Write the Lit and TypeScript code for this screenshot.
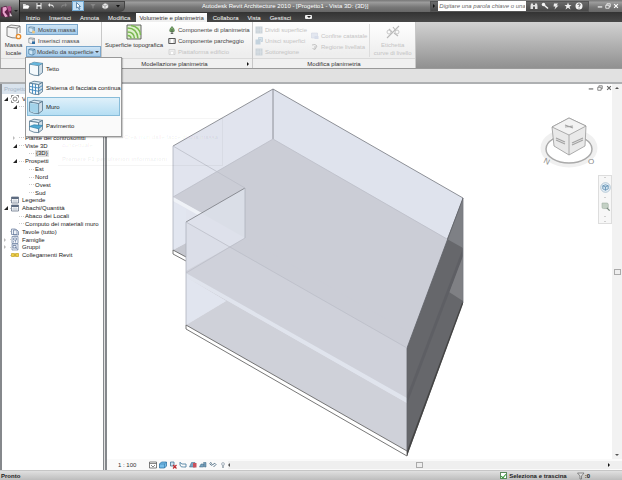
import { LitElement, html, svg, css, nothing } from "lit";
import { customElement, property } from "lit/decorators.js";
import { classMap } from "lit/directives/class-map.js";

const cube = (inner: unknown) => svg`
  <path d="M1.5 3.2 6 1.2 14.5 2.4 10.6 4.6Z" fill="#dcebf4" stroke="#52748c" stroke-width=".8"/>
  <path d="M1.5 3.2 10.6 4.6V14.6Q6 15 1.5 12.4Z" fill="#f4f9fc" stroke="#52748c" stroke-width=".8"/>
  <path d="M10.6 4.6 14.5 2.4V11.6L10.6 14.6Z" fill="#cfdde7" stroke="#52748c" stroke-width=".8"/>${inner}`;

const art: Record<string, unknown> = {
  roof: cube(svg`<path d="M1.5 3.2 6 1.2 14.5 2.4 10.6 4.6Z" fill="#64b5dc"/>`),
  curtain: cube(svg`<path d="M4.5 3.8V13.6M7.5 4.2V14.4M1.5 6.4 10.6 8 14.5 5.5M1.5 9.4 10.6 11.3 14.5 8.6" fill="none" stroke="#3c86bd" stroke-width=".9"/>`),
  wall: cube(svg`<path d="M2 4 10.2 5.2V14Q6 14.4 2 12Z" fill="#a3d3ea"/>`),
  floor: cube(svg`<path d="M1.5 8.5 6 6.8 14.5 7.5 10.6 10.8Z" fill="#4fa9d3" stroke="#2f7fa8" stroke-width=".7"/>`),
  mass: svg`<path d="M1 3 5 1 14 2 11 4.2Z M1 3V12Q6 14.5 11 14V4.2M14 2V9" fill="#f5f5f5" stroke="#666" stroke-width=".8"/><circle cx="12.500" cy="12.500" r="2.200" fill="#fff3dc" stroke="#e58a2c" stroke-width="1.3"/>`,
  show: svg`<path d="M1.5 3 5 1.5 13 2.8 10 4.6Z M1.5 3V11.5Q6 13.6 10 13V4.6M13 2.8V10" fill="#d9ebf7" stroke="#3f6b8d"/><circle cx="11" cy="12" r="3" fill="#efc77e"/>`,
  place: svg`<path d="M1.5 3 5 1.5 13 2.8 10 4.6Z M1.5 3V11.5Q6 13.6 10 13V4.6M13 2.8V10" fill="#f4f4f4" stroke="#56646f"/><path d="M8 9h6v5H8z" fill="#2e6fa5"/>`,
  face: svg`<path d="M1.5 3 5 1.5 14 2.8 10 4.6Z M1.5 3V11.5Q6 14.6 10 14V4.6M14 2.8V11L10 14" fill="#cfe7f7" stroke="#2c658e" stroke-width="1.2"/>`,
  topo: svg`<path d="M1 1H15V15H1Z" fill="#dff0cf" stroke="#555" stroke-width=".9"/><path d="M1.5 4Q11 4 12 14.5M1.5 8Q8 8 8.5 14.5M5 1.5Q14 3 14.5 11M1.5 11.5Q5 11.5 5 14.5" fill="none" stroke="#79b850" stroke-width="1.5"/>`,
  tree: svg`<path d="M8 1Q13.500 6 12.500 10.500Q10 12.500 8 11.500Q6 12.500 3.500 10.500Q2.500 6 8 1Z" fill="#7cae68" stroke="#3d6137" stroke-width="1.3"/><path d="M8 6V15M5.500 15H10.500" stroke="#444" stroke-width="1.5"/>`,
  park: svg`<path d="M1.500 3H14.500V13H1.500Z" fill="#fff" stroke="#444" stroke-width="1.8"/><path d="M4 3V13M12 3V13" stroke="#777"/>`,
  pad: svg`<path d="M2 3H14V13H2Z" fill="#eee" stroke="#ccc" stroke-width="1.5"/><path d="M5 7H11V13H5Z" fill="#fff" stroke="#d4d4d4"/>`,
  split: svg`<path d="M1 1H15V15H1Z" fill="#ccd4da"/><path d="M6 1V15M11 1V15M1 8H15" stroke="#dfe5e9"/>`,
  merge: svg`<path d="M1 5H11V15H1Z" fill="#c4d3de"/><path d="M7 1H15V9H12V5H7Z" fill="#dae3ea" stroke="#abc0d0"/>`,
  bound: svg`<path d="M1 2H13V12H1Z" fill="#e3e7f0" stroke="#cdd3e0"/><path d="M7 8H15V14H7Z" fill="#d7ddea"/>`,
  graded: svg`<path d="M2 4Q9 1 12 6L8 13L3 11M8 6V12" fill="none" stroke="#bbb" stroke-width="1.7"/>`,
  label: svg`<path d="M2 14 14 2M4 5l3 3M9 9l4 3M8 3l3 4" fill="none" stroke="#b9b9b9" stroke-width="1.1"/><circle cx="4" cy="8" r="2" fill="none" stroke="#c8c8c8"/><circle cx="12" cy="8" r="2" fill="none" stroke="#c8c8c8"/>`,
  open: svg`<path d="M2 4H7L8 6H13V13H2Z" fill="#ddd"/><path d="M4 8H15L12 13H2Z" fill="#fff"/>`,
  save: svg`<path d="M3 2H13V14H3Z" fill="#eee"/><path d="M5 2H11V6H5ZM5 9H11V14H5Z" fill="#555"/>`,
  undo: svg`<path d="M6 2 2 6 6 10V7Q12 6 13 12Q15 4 6 5Z" fill="#eee"/>`,
  redo: svg`<path d="M10 2 14 6 10 10V7Q4 6 3 12Q1 4 10 5Z" fill="#999"/>`,
  arrow: svg`<path d="M5 1V12L8 10L10 15L12 14L10 9H13Z" fill="#fff" stroke="#275a86" stroke-width="1.3"/>`,
  dot: svg`<path d="M3 4H13L9 9V13H7V9Z" fill="#999"/>`,
  view3d: svg`<path d="M3 6 8 3 14 5V11L8 14 3 11Z" fill="#eee" stroke="#ccc"/><path d="M3 6 8 8 14 5M8 8V14" fill="none" stroke="#666"/>`,
  caret: svg`<path d="M4 6H12L8 11Z" fill="#111"/>`,
  find: svg`<path d="M2 3H6V14H1V8ZM10 3H14L15 8V14H10ZM6 6H10V9H6Z" fill="#e2e2e2"/>`,
  key: svg`<circle cx="5" cy="5" r="3.500" fill="#f4f4f4"/><path d="M6 6 14 13" stroke="#f4f4f4" stroke-width="3"/>`,
  comm: svg`<path d="M4 3H12L9 7H13L5 15L7 9H3" fill="#eee"/>`,
  star: svg`<path d="M8 1 10 6H15L11 9.500L13 15L8 11.500L3 15L5 9.500L1 6H6Z" fill="#eee"/>`,
  help: svg`<circle cx="8" cy="8" r="7" fill="#f5f5f5"/><path d="M5.500 6Q6 3.500 8 3.500T10.500 6Q10 7.500 8 8.500V10M8 11.500V13" fill="none" stroke="#444" stroke-width="1.8"/>`,
  min: svg`<path d="M2 9H14V12H2Z" fill="currentColor"/>`,
  max: svg`<path d="M5 6V2H14V10H11M2 6H11V14H2Z" fill="none" stroke="currentColor" stroke-width="2"/>`,
  close: svg`<path d="M3 3 13 13M13 3 3 13" stroke="currentColor" stroke-width="3"/>`,
  sheet: svg`<path d="M1 2H15V14H1Z" fill="#fff" stroke="#5d6b80" stroke-width="1.5"/><path d="M1 2H15V6H1Z" fill="#5d6b80"/><path d="M6 6V14M10 6V14M1 10H15" stroke="#9aa5b5"/>`,
  page: svg`<path d="M1 2H9L12 5V13H1ZM5 4H12L15 7V14H5Z" fill="#eef2f8" stroke="#62779a" stroke-width="1.4"/>`,
  family: svg`<path d="M2 1H14V15H2Z" fill="#f1f4fa" stroke="#667b9e" stroke-width="1.4"/><path d="M5 4H11V8H5ZM5 10V13M9 8V13" fill="none" stroke="#667b9e" stroke-width="1.3"/>`,
  group: svg`<path d="M2 2H14V14H2Z" fill="#f1f4fa" stroke="#667b9e" stroke-width="1.3"/><path d="M4 5H10V10H4ZM9 8L13 13" fill="none" stroke="#4c638b" stroke-width="1.3"/>`,
  link: svg`<path d="M1 5H7V11H1ZM9 5H15V11H9ZM5 8H11" fill="#f0d24a" stroke="#c4a21c" stroke-width="1.400"/>`,
  views: svg`<circle cx="8" cy="8" r="4" fill="none" stroke="#555" stroke-width="1.4"/><path d="M1 5V1H5M11 1H15V5M15 11V15H11M5 15H1V11" fill="none" stroke="#555" stroke-width="1.4"/>`,
  detail: svg`<path d="M1 2H15V14H1Z" fill="#fff" stroke="#555" stroke-width="1.5"/><path d="M1 5H15M4 8 8 12 12 8" fill="none" stroke="#555" stroke-width="1.400"/>`,
  box: svg`<path d="M1 6 5 2H15V10L11 14H1Z" fill="#77bde8" stroke="#246a9c" stroke-width="1.400"/><path d="M1 6H11V14M11 6L15 2" fill="none" stroke="#246a9c"/>`,
  sun: svg`<path d="M3 2H10V10H3Z" fill="#cbe3f1" stroke="#3e6d8e" stroke-width="1.500"/><path d="M8 8 15 15M15 8 8 15" stroke="#c0282c" stroke-width="2.300"/>`,
  crop: svg`<path d="M2 2V8Q3 13 9 12H14V6H6L2 3" fill="none" stroke="#5484a4" stroke-width="1.800"/>`,
  cropx: svg`<path d="M1 12 5 3H12V12Z" fill="#78a6c6" stroke="#35607f"/><path d="M8 4H15V13H8Z" fill="#c8505a"/>`,
  cropv: svg`<path d="M1 12 4 6H9V12ZM9 3H14V12H11Z" fill="#7aa3be" stroke="#35607f"/>`,
  glass: svg`<path d="M1 5Q4 11 8 7Q12 2 14 7L9 12M2 3 6 5" fill="none" stroke="#41627a" stroke-width="1.700"/>`,
  bulb: svg`<circle cx="8" cy="6" r="3" fill="#e0e6ec" stroke="#7e8d99"/><path d="M8 9V14" stroke="#7e8d99" stroke-width="2.500"/>`,
  funnel: svg`<path d="M1 2H14L9 8V14H6V8Z" fill="#ddd" stroke="#555" stroke-width="1.200"/>`,
  wheel: svg`<circle cx="8" cy="8" r="7" fill="#e7f0f7" stroke="#9cb4c8"/><path d="M4 5.500 8 4 12 5.500V10L8 12 4 10ZM4 5.500 8 7 12 5.500M8 7V12" fill="#cde0ee" stroke="#4f81a8"/>`,
  zoom: svg`<path d="M3 3H10Q12 3 12 5V9Q12 11 10 11H5Q3 11 3 9Z" fill="#c3d0c4" stroke="#a3b2a6"/><path d="M10 10 14 14" stroke="#7a8b80" stroke-width="2"/>`,
  logo: svg`<path d="M1 14V4L7 2 9 5 13 3V12L10 15Z" fill="#5f2148"/><path d="M3 4 7 3 8 6 5 9 9 14 6 15 3 10Z" fill="#e9a4cd"/><path d="M8 3 12 2 13 7 10 9Z" fill="#b1508b"/><path d="M11 9 14 14H11Z" fill="#d9cbd5"/>`,
};

@customElement("ui-icon")
class UiIcon extends LitElement {
  @property() name = "";
  static styles = css`
    :host { display: block; flex: none; width: 8px; height: 8px; }
    svg { display: block; width: 100%; height: 100%; }
  `;
  render() {
    return html`<svg viewBox="0 0 16 16" aria-hidden="true">${art[this.name] ?? nothing}</svg>`;
  }
}

type Row = { text: string; depth: number; open?: boolean; icon?: string; selected?: boolean };
const tree: Row[] = [
  { text: "Viste", depth: 0, open: true, icon: "views" },
  { text: "", depth: 1, open: true },
  { text: "", depth: 2 },
  { text: "", depth: 2 },
  { text: "", depth: 2 },
  { text: "Piante dei controsoffitti", depth: 1, open: false },
  { text: "Viste 3D", depth: 1, open: true },
  { text: "{3D}", depth: 2, selected: true },
  { text: "Prospetti", depth: 1, open: true },
  { text: "Est", depth: 2 },
  { text: "Nord", depth: 2 },
  { text: "Ovest", depth: 2 },
  { text: "Sud", depth: 2 },
  { text: "Legende", depth: 0, icon: "sheet" },
  { text: "Abachi/Quantità", depth: 0, open: true, icon: "sheet" },
  { text: "Abaco dei Locali", depth: 1 },
  { text: "Computo dei materiali muro", depth: 1 },
  { text: "Tavole (tutto)", depth: 0, icon: "page" },
  { text: "Famiglie", depth: 0, open: false, icon: "family" },
  { text: "Gruppi", depth: 0, open: false, icon: "group" },
  { text: "Collegamenti Revit", depth: 0, icon: "link" },
];

const tabs = ["Inizio", "Inserisci", "Annota", "Modifica", "Volumetrie e planimetria", "Collabora", "Vista", "Gestisci"];
const faceMenu = [
  ["roof", "Tetto"],
  ["curtain", "Sistema di facciata continua"],
  ["wall", "Muro"],
  ["floor", "Pavimento"],
];

@customElement("app-root")
class AppRoot extends LitElement {
  static styles = css`
    :host {
      display: flex; flex-direction: column; height: 100vh; overflow: hidden;
      background: #e1e1e1; color: #333;
      font: 6px/8px "Liberation Sans", Arial, sans-serif;
    }
    * { box-sizing: border-box; }
    button, input { font: inherit; color: inherit; margin: 0; padding: 0; border: 0; background: none; border-radius: 0; }
    button { display: flex; align-items: center; white-space: nowrap; }
    input { min-width: 0; }

    .top { display: grid; grid-template-columns: 20px minmax(0, 1fr); flex: none; }
    .app { position: relative; flex-direction: row; background: linear-gradient(#a5a5a5, #4c4c4c 60%, #333); border-right: 1px solid #222; }
    .app ui-icon { width: 14px; height: 16px; }
    .app .tri { color: #222; }
    .tri { width: 0; height: 0; border: 2px solid transparent; border-bottom: 0; border-top-color: currentColor; flex: none; }
    .title { display: flex; align-items: center; height: 12px; background: linear-gradient(#777, #9b9b9b 20%, #777 60%, #666); color: #fff; }
    .quick { display: flex; align-items: center; justify-content: space-between; width: 105px; height: 11px; padding: 0 2px; background: linear-gradient(#777, #484848); border: 1px solid #444; border-left: 0; border-radius: 0 0 5px 0; }
    .quick .on { background: #c4e0f5; border: 1px solid #72aad4; padding: 0 1px; }
    .quick .dim { opacity: .6; }
    .name { flex: 1; padding: 0 0 0 77px; margin: 0; font-size: 6px; line-height: 8px; font-weight: normal; white-space: nowrap; }
    .info { display: flex; align-items: center; justify-content: space-between; width: 159px; height: 11px; background: linear-gradient(#6a6a6a, #484848); padding: 0 5px 0 2px; border: 1px solid #555; }
    .info input { width: 88px; height: 10px; background: #fff; font-style: italic; padding: 0 1px; }
    .info input::placeholder { color: #666; opacity: 1; }
    .side { width: 0; height: 0; border: 2px solid transparent; border-right: 0; border-left-color: #111; }
    .win { display: flex; justify-content: flex-end; gap: 2px; width: 33px; padding: 0 3px 0 0; }
    .win ui-icon { width: 6px; height: 6px; }
    .tabs { display: flex; align-items: flex-end; height: 10px; padding-left: 3px; background: linear-gradient(#333, #484848); color: #fff; }
    .tabs button { height: 9px; padding: 0 3px; margin-right: 3px; }
    .tabs .active { background: linear-gradient(#fff, #eee); color: #333; }
    .tabs .pill { width: 7px; height: 4px; background: #eee; border-radius: 1px; align-self: center; margin-left: 8px; padding: 0; justify-content: center; color: #222; }

    .ribbon { display: flex; flex: none; height: 47px; background: linear-gradient(#d2d2d2, #909090); border-bottom: 1px solid #999; }
    .panel { display: flex; flex-direction: column; border-right: 1px solid #c8c8c8; background: linear-gradient(#fff, #eeeeee 70%); }
    .mass { width: 102px; border-left: 1px solid #aaa; }
    .site { width: 151px; }
    .modify { width: 163px; }
    .body { display: flex; flex: 1; min-height: 0; align-items: flex-start; padding-top: 2px; }
    .caption { display: flex; flex: none; align-items: center; height: 10px; background: #f0f0f0; border-top: 1px solid #dadada; margin: 0; font-size: 6px; font-weight: normal; justify-content: center; }
    .caption span { flex: 1; text-align: center; }
    .caption .side { margin-right: 3px; }
    .big { flex-direction: column; line-height: 8px; text-align: center; flex: none; gap: 1px; }
    .big ui-icon { width: 16px; height: 16px; }
    .mass .big { width: 25px; }
    .site .big { width: 64px; }
    .modify .big { flex: 1; height: 33px; border-left: 1px solid #ddd; }
    .col { display: flex; flex-direction: column; align-items: flex-start; }
    .col button { height: 11px; gap: 2px; padding: 0 1px; border: 1px solid transparent; color: #444; }
    .col .hot { background: linear-gradient(#cfe5f6, #a2caea); border-color: #7ba7cc; }
    .drop .hot { gap: 1px; }
    .modify .col + .col { padding-top: 6px; }
    button:disabled, .col button:disabled { color: #c4c4c4; }
    .drop { position: relative; display: flex; }

    .menu { position: absolute; z-index: 3; top: 11px; left: -1px; width: 97px; margin: 0; padding: 1px; list-style: none; background: #fafafa; border: 1px solid #999; box-shadow: 1px 1px 1px #0003; }
    .menu li { display: flex; }
    .menu li button { width: 100%; height: 19px; gap: 2px; padding: 0 1px; border-width: 1px 0; color: #222; }
    .menu ui-icon { width: 16px; height: 16px; }
    .menu li .picked { background: linear-gradient(#dff0fa, #b5def3); border: 1px solid #88bcd9; padding: 0; }
    .tip { position: absolute; z-index: 2; top: 72px; left: 32px; width: 165px; height: 48px; padding: 14px 4px 0; border: 1px solid #0000000a; border-left: 0; color: #00000012; pointer-events: none; }
    .tip p { margin: 0; white-space: nowrap; }
    .tip .more { margin-top: 6px; font-weight: bold; }
    .tip .body-text { text-align: right; }

    .work { display: grid; grid-template-columns: 105px minmax(0, 1fr); flex: 1; min-height: 0; margin-top: 13px; border-top: 2px solid #aeb0b2; }
    .browser { background: #fff; border: solid #85888c; border-width: 0 1px 0 2px; margin-right: 1px; min-width: 0; }
    .browser h2 { height: 10px; margin: 0; padding-left: 2px; font-size: 6px; line-height: 10px; font-weight: normal; background: #d9e3ed; color: #a5b4c6; white-space: nowrap; overflow: hidden; }
    .tree { display: flex; flex-direction: column; height: 165px; margin: 0; padding: 1px 0 0 2px; list-style: none; }
    .tree li { display: flex; align-items: center; flex: 1; min-height: 0; color: #222; white-space: nowrap; }
    .tree .d1 { padding-left: 9px; }
    .tree .d2 { padding-left: 19px; }
    .twist { width: 6px; flex: none; }
    .twist.open::before { content: ""; display: block; width: 0; height: 0; border: 2px solid transparent; border-right-color: #222; border-bottom-color: #222; }
    .twist.shut::before { content: ""; display: block; width: 0; height: 0; border: 2px solid transparent; border-left-color: #bbb; }
    .dash { width: 5px; border-top: 1px dotted #ccc; margin-right: 1px; flex: none; }
    .d0 ui-icon { margin-right: 3px; }
    .d0 .dash { width: 1px; margin-right: 0; }
    .sel { background: #dedede; padding: 0 1px; line-height: 7px; }

    .view { display: grid; grid-template: minmax(0, 1fr) 11px / minmax(0, 1fr) 10px; min-width: 0; border-left: 2px solid #85888c; background: #fff; }
    .canvas { position: relative; min-height: 0; }
    .canvas svg.scene { display: block; width: 100%; height: 100%; }
    .mdi { position: absolute; top: 1px; right: 0; display: flex; gap: 3px; color: #666; }
    .mdi ui-icon { width: 6px; height: 6px; }
    .nav { position: absolute; top: 91px; right: 0; display: flex; flex-direction: column; align-items: center; justify-content: space-between; width: 14px; height: 49px; padding: 1px; border: 1px solid #ddd; background: #f7f7f7; color: #aaa; }
    .nav ui-icon { width: 11px; height: 11px; }
    .nav .tri { border-width: 1px; }
    .vbar { display: flex; flex-direction: column; align-items: center; justify-content: space-between; background: #f2f2f2; padding: 3px 0; color: #555; }
    .up { border: 2px solid transparent; border-top: 0; border-bottom-color: currentColor; }
    .thumb { width: 7px; height: 6px; border: 1px solid #aaa; background: #eee; }
    .foot { grid-column: 1 / -1; display: flex; align-items: center; background: #fafafa; color: #333; }
    .scale { width: 42px; padding-left: 11px; }
    .controls { display: flex; gap: 2px; width: 79px; }
    .hbar { display: flex; flex: 1; align-items: center; justify-content: space-between; height: 8px; padding: 0 12px 0 0; background: #efefef; color: #555; }
    .left { border: 2px solid transparent; border-left: 0; border-right-color: #555; width: 0; height: 0; }
    .status { display: flex; align-items: center; flex: none; height: 10px; padding: 0 32px 0 1px; background: linear-gradient(#e0e0e0, #bdbdbd); border-top: 1px solid #c6c6c6; font-weight: bold; color: #222; }
    .status label { display: flex; align-items: center; gap: 2px; margin-left: auto; }
    .status input { appearance: none; width: 7px; height: 7px; background: #fff; border: 1px solid #5c8a5c; }
    .status input:checked::before { content: ""; display: block; width: 2px; height: 4px; margin-left: 1px; border: solid #349a38; border-width: 0 1px 1px 0; transform: rotate(40deg); }
    .filter { margin-left: 10px; }
  `;

  tool(icon: string, text: string, off = false, hot = false) {
    return html`<button ?disabled=${off} class=${classMap({ hot })}><ui-icon name=${icon}></ui-icon>${text}</button>`;
  }

  iconButton(icon: string, label: string, cls = "") {
    return html`<button class=${cls} aria-label=${label}><ui-icon name=${icon}></ui-icon></button>`;
  }

  header() {
    return html`<header class="top">
      <button class="app" aria-label="Menu applicazione"><ui-icon name="logo"></ui-icon><span class="tri"></span></button>
      <div>
        <div class="title">
          <div class="quick">
            ${this.iconButton("open", "Apri")}${this.iconButton("save", "Salva")}${this.iconButton("undo", "Annulla")}
            ${this.iconButton("redo", "Ripeti", "dim")}${this.iconButton("arrow", "Modifica", "on")}
            ${this.iconButton("dot", "Opzioni", "dim")}${this.iconButton("view3d", "Vista 3D")}${this.iconButton("caret", "Personalizza")}
          </div>
          <h1 class="name">Autodesk Revit Architecture 2010 - [Progetto1 - Vista 3D: {3D}]</h1>
          <div class="info">
            <span class="side"></span>
            <input aria-label="Cerca" placeholder="Digitare una parola chiave o una frase">
            ${this.iconButton("find", "Trova")}${this.iconButton("key", "Abbonamento")}${this.iconButton("comm", "Comunicazioni")}
            ${this.iconButton("star", "Preferiti")}${this.iconButton("help", "Guida")}
          </div>
          <div class="win">${this.iconButton("min", "Riduci")}${this.iconButton("max", "Ripristina")}${this.iconButton("close", "Chiudi")}</div>
        </div>
        <nav class="tabs">
          ${tabs.map((t, i) => html`<button class=${i === 4 ? "active" : ""}>${t}</button>`)}
          <button class="pill" aria-label="Riduci barra"><span class="tri"></span></button>
        </nav>
      </div>
    </header>`;
  }

  ribbon() {
    return html`<div class="ribbon">
      <section class="panel mass">
        <div class="body">
          <button class="big"><ui-icon name="mass"></ui-icon><span>Massa<br>locale</span></button>
          <div class="col">
            ${this.tool("show", "Mostra massa", false, true)}
            ${this.tool("place", "Inserisci massa")}
            <div class="drop">
              <button class="hot"><ui-icon name="face"></ui-icon>Modello da superficie<span class="tri"></span></button>
              <ul class="menu">
                ${faceMenu.map(([icon, text]) => html`<li><button class=${text === "Muro" ? "picked" : ""}><ui-icon name=${icon}></ui-icon>${text}</button></li>`)}
              </ul>
              <div class="tip">
                <p class="body-text">Crea muri dalle facce di una massa</p>
                <p>concettuale.</p>
                <p class="more">Premere F1 per ulteriori informazioni</p>
              </div>
            </div>
          </div>
        </div>
        <h2 class="caption"></h2>
      </section>
      <section class="panel site">
        <div class="body">
          <button class="big"><ui-icon name="topo"></ui-icon><span>Superficie topografica</span></button>
          <div class="col">
            ${this.tool("tree", "Componente di planimetria")}
            ${this.tool("park", "Componente parcheggio")}
            ${this.tool("pad", "Piattaforma edificio", true)}
          </div>
        </div>
        <h2 class="caption"><span>Modellazione planimetria</span><i class="side"></i></h2>
      </section>
      <section class="panel modify">
        <div class="body">
          <div class="col">
            ${this.tool("split", "Dividi superficie", true)}
            ${this.tool("merge", "Unisci superfici", true)}
            ${this.tool("split", "Sottoregione", true)}
          </div>
          <div class="col">
            ${this.tool("bound", "Confine catastale", true)}
            ${this.tool("graded", "Regione livellata", true)}
          </div>
          <button class="big" disabled><ui-icon name="label"></ui-icon><span>Etichetta<br>curve di livello</span></button>
        </div>
        <h2 class="caption"><span>Modifica planimetria</span></h2>
      </section>
    </div>`;
  }

  scene() {
    return html`<svg class="scene" viewBox="107 84 505 375" role="img" aria-label="Vista 3D">
      <path d="M173 146 273 89 463 198 407 348V451L186 325V257L173 250Z" fill="#e1e4ee"/>
      <path d="M273 89 463 198V248L273 139Z" fill="#dfe3ed"/>
      <path d="M173 197 273 139 463 248 407 401 186 275 245 238Z" fill="#cbcdd6"/>
      <path d="M173 250 186 243V257Z" fill="#c6c8d0"/>
      <path d="M173 197 202 213 198 215 173 201Z" fill="#eff2f7"/>
      <path d="M173 202 186 209V243L173 250Z" fill="#e2e6f0"/>
      <path d="M186 222 245 188V238L186 273Z" fill="#dde0ea" opacity=".85"/>
      <path d="M186 271 245 238 407 331V398L186 273Z" fill="#cbcdd6"/>
      <path d="M186 222 407 348V398L186 273Z" fill="#d6d9e1" opacity=".35"/>
      <path d="M186 277 407 403V451L186 325 226 301Z" fill="#cfd1d9"/>
      <path d="M186 277 226 301 186 325Z" fill="#e1e5ef"/>
      <path d="M186 273 407 398V403L186 277Z" fill="#e0e4ed"/>
      <path d="M463 198 407 348V456L463 303Z" fill="#66676b"/>
      <path d="M463 198 447 239 463 248Z" fill="#7e8085"/>
      <path d="M463 254 449 292 463 301Z" fill="#7f8084"/>
      <path d="M463 248 407 396V404L463 256Z" fill="#5e5f64"/>
      <path d="M186 325 407 451V456L186 329Z M186 257 173 250V254L186 261" fill="#fff" stroke="#555" stroke-width=".8"/>
      <path d="M463 300V304L407 456V451Z" fill="#444"/>
      <path d="M173 146 273 89 463 198V303M273 89V139M186 222 245 188" fill="none" stroke="#777a80" stroke-width=".8"/>
      <path d="M463 198 407 348V451" fill="none" stroke="#606268" stroke-width=".8"/>
      <path d="M173 146V250M186 222V325M245 188V238" fill="none" stroke="#adb1bd" stroke-width=".8"/>
      <path d="M173 146 245 188M186 222 407 348M173 197 273 139 447 239M186 273 245 238" fill="none" stroke="#bbbec8" stroke-width=".8"/>
      <g>
        <ellipse cx="569" cy="148" rx="26" ry="17" fill="none" stroke="#f0f0f0" stroke-width="5"/>
        <ellipse cx="569" cy="149" rx="23" ry="14" fill="#fff" stroke="#aaa" stroke-width="1.500"/>
        <path d="M552 127 569 118 586 126 585 146 569 155 554 146Z" fill="#e9e9e9" stroke="#999" stroke-width=".8"/>
        <path d="M552 127 569 118 586 126 569 135Z" fill="#f3f3f3" stroke="#999" stroke-width=".8"/>
        <path d="M569 135V155" fill="none" stroke="#999" stroke-width=".8"/>
        <path d="M565 125 573 128M565 127 573 126M556 138 565 142M556 140 565 144M572 143 583 138M572 145 583 140" stroke="#a2a2a2" stroke-width="1.200"/>
        <text x="544" y="164" font-size="8" fill="#888" transform="rotate(25 547 161)">N</text>
        <text x="588" y="164" font-size="8" fill="#888">O</text>
      </g>
    </svg>`;
  }

  render() {
    return html`
      ${this.header()}${this.ribbon()}
      <main class="work">
        <aside class="browser">
          <h2>Progetto1</h2>
          <ul class="tree">
            ${tree.map((r) => html`<li class="d${r.depth}">
              <span class=${classMap({ twist: true, open: r.open === true, shut: r.open === false })}></span>
              <span class="dash"></span>
              ${r.icon ? html`<ui-icon name=${r.icon}></ui-icon>` : nothing}
              <span class=${r.selected ? "sel" : ""}>${r.text}</span>
            </li>`)}
          </ul>
        </aside>
        <section class="view">
          <div class="canvas">
            ${this.scene()}
            <div class="mdi">${this.iconButton("min", "Riduci vista")}${this.iconButton("max", "Ripristina vista")}${this.iconButton("close", "Chiudi vista")}</div>
            <div class="nav">
              <span class="tri"></span>${this.iconButton("wheel", "Ruota di navigazione")}
              <span class="tri"></span>${this.iconButton("zoom", "Zoom")}
              <span class="tri"></span><span class="tri"></span>
            </div>
          </div>
          <div class="vbar"><span class="up"></span><span class="thumb"></span><span class="tri"></span></div>
          <div class="foot">
            <span class="scale">1 : 100</span>
            <div class="controls">
              ${["detail", "box", "sun", "crop", "cropx", "cropv", "glass", "bulb"].map((n) => this.iconButton(n, n))}
            </div>
            <div class="hbar"><span class="left"></span><span class="thumb"></span><span class="side"></span></div>
          </div>
        </section>
      </main>
      <footer class="status">
        <span>Pronto</span>
        <label><input type="checkbox" checked>Seleziona e trascina</label>
        <ui-icon class="filter" name="funnel"></ui-icon><span>:0</span>
      </footer>`;
  }
}
